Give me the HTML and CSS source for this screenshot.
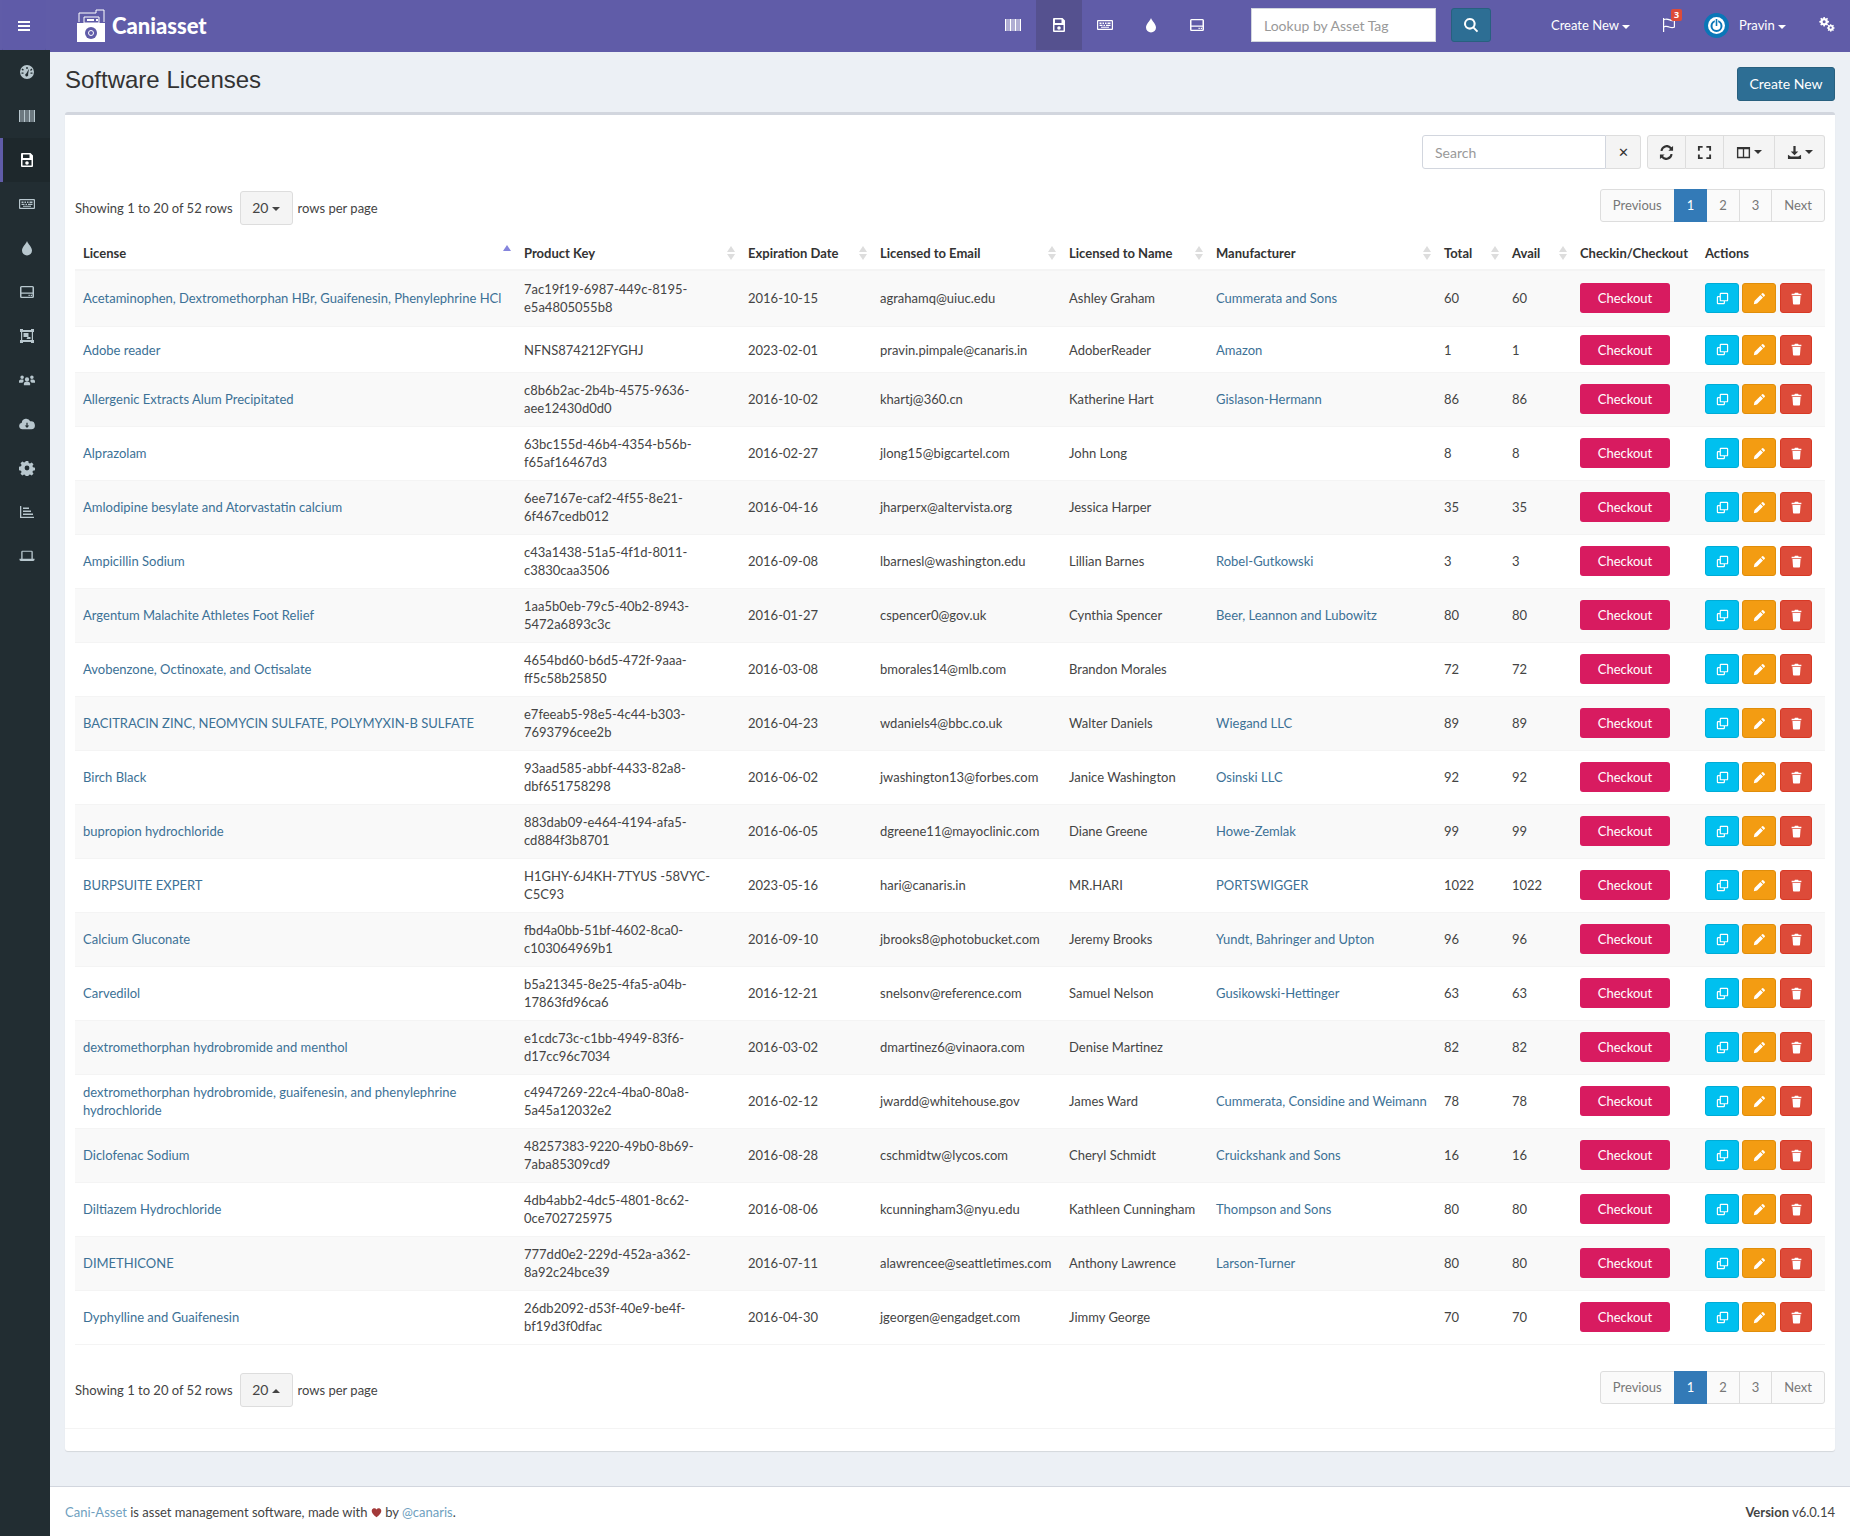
FILE: index.html
```html
<!doctype html>
<html>
<head>
	<meta charset="UTF-8">
	<title>Software Licenses</title>
	<link rel="stylesheet" href="styles.css">
</head>
<body>
<svg class="defs" width="0" height="0">
	<symbol id="i-barcode" viewBox="0 0 16 16"><path d="M0 2h1.500v12H0zM2.500 2h1v12h-1zM4.500 2h2v12h-2zM7.500 2h1v12h-1zM9.500 2h2v12h-2zM12.500 2h1v12h-1zM14.500 2H16v12h-1.500z"/></symbol>
	<symbol id="i-save" viewBox="0 0 16 16"><path fill-rule="evenodd" d="M2 1h9.500L14 3.500V14a1 1 0 0 1-1 1H3a1 1 0 0 1-1-1V2a1 1 0 0 1 1-1zM4 2.500V6h6.500V2.500zM3.500 8v5.500h9V8zM8 9.200a1.800 1.800 0 1 1 0 3.600 1.800 1.800 0 0 1 0-3.600z"/></symbol>
	<symbol id="i-keyboard" viewBox="0 0 16 16"><path fill-rule="evenodd" d="M1 3h14a1 1 0 0 1 1 1v8a1 1 0 0 1-1 1H1a1 1 0 0 1-1-1V4a1 1 0 0 1 1-1zm.2 1.200v7.600h13.600V4.200zM2.500 5.500h2v1.400h-2zm3 0h1.500v1.400H5.500zm2.500 0h1.500v1.400H8zm2.500 0h3v1.400h-3zm-8 2.200h3v1.400h-3zm4 0H8v1.400H6.500zm2.500 0h4.500v1.400H9zM4 9.800h8v1H4z"/></symbol>
	<symbol id="i-drop" viewBox="0 0 16 16"><path d="M8 1c1 3 5 6 5 9.500A5 5 0 0 1 3 10.500C3 7 7 4 8 1z"/></symbol>
	<symbol id="i-hdd" viewBox="0 0 16 16"><path fill-rule="evenodd" d="M2.500 2h11A1.500 1.500 0 0 1 15 3.500v9a1.500 1.500 0 0 1-1.500 1.500h-11A1.500 1.500 0 0 1 1 12.500v-9A1.500 1.500 0 0 1 2.500 2zm0 1.200v5.300h11V3.200zm0 6.500v3.100h11V9.700zm7 1h1.300v1.200H9.500zm2.200 0H13v1.200h-1.300z"/></symbol>
	<symbol id="i-object" viewBox="0 0 16 16"><path fill-rule="evenodd" d="M1 1h3v1h8V1h3v3h-1v8h1v3h-3v-1H4v1H1v-3h1V4H1zm2.200 3v8h9.600V4zM4.500 5h5v4h-5zm4 4h3v2h-4z"/></symbol>
	<symbol id="i-users" viewBox="0 0 18 16"><path d="M9 5a2.400 2.400 0 1 1 0 4.800A2.400 2.400 0 0 1 9 5zM3.500 3a2 2 0 1 1 0 4 2 2 0 0 1 0-4zM14.500 3a2 2 0 1 1 0 4 2 2 0 0 1 0-4zM5.500 14v-2c0-1.500 1.200-2 3.500-2s3.500.5 3.500 2v2zM0 11V9.500C0 8 1 7.500 3.500 7.500c.6 0 1.100.1 1.500.3-.2.600 0 1.300.5 1.700-.8.300-1.300.8-1.500 1.500zM18 11V9.500c0-1.500-1-2-3.500-2-.6 0-1.100.1-1.500.3.200.600 0 1.300-.5 1.700.8.300 1.300.8 1.500 1.500z"/></symbol>
	<symbol id="i-cloud" viewBox="0 0 18 16"><path fill-rule="evenodd" d="M4 14a3.800 3.800 0 0 1-.9-7.500A5 5 0 0 1 12.600 5 4.500 4.500 0 0 1 14 14zm4.300-7.500v3.300H6.500L9 12.500l2.500-2.700H9.700V6.500z"/></symbol>
	<symbol id="i-cog" viewBox="0 0 16 16"><path fill-rule="evenodd" d="M6.700 1h2.600l.4 2 1.300.6 1.700-1.100 1.800 1.800-1.100 1.700.6 1.300 2 .4v2.600l-2 .4-.6 1.300 1.100 1.700-1.800 1.800-1.700-1.100-1.300.6-.4 2H6.700l-.4-2-1.300-.6-1.700 1.100-1.800-1.800 1.100-1.700-.6-1.300-2-.4V6.700l2-.4.6-1.300-1.100-1.700 1.800-1.800L5 2.600l1.300-.6zM8 5.600a2.400 2.400 0 1 0 0 4.800 2.400 2.400 0 0 0 0-4.800z"/></symbol>
	<symbol id="i-chart" viewBox="0 0 16 16"><path d="M1 2h1.300v10.700H15V14H1zM4 3.500h6v1.600H4zM4 6.500h8v1.600H4zM4 9.500h10v1.600H4z"/></symbol>
	<symbol id="i-laptop" viewBox="0 0 18 16"><path fill-rule="evenodd" d="M4 2h10a1.500 1.500 0 0 1 1.500 1.500V11h2v1a1.500 1.500 0 0 1-1.500 1.500H2A1.500 1.500 0 0 1 .5 12v-1h2V3.500A1.500 1.500 0 0 1 4 2zm0 1.300V11h10V3.300z"/></symbol>
	<symbol id="i-dash" viewBox="0 0 16 16"><path fill-rule="evenodd" d="M8 1a7 7 0 1 1 0 14A7 7 0 0 1 8 1zM7.300 3v2h1.400V3zM3.500 4.500l-1 1 1.400 1.300 1-1zm9 0L11 6l1 1 1.400-1.500zM2.500 8.500v1.300h2V8.500zm9 0v1.300h2V8.500zM10 4.800 7.300 9.500a1.500 1.500 0 1 0 1.800.8z"/></symbol>
	<symbol id="i-copy" viewBox="0 0 16 16"><path fill-rule="evenodd" d="M6 1h7.500A1.500 1.500 0 0 1 15 2.500V10a1.500 1.500 0 0 1-1.500 1.500H11v2A1.500 1.500 0 0 1 9.500 15h-7A1.500 1.500 0 0 1 1 13.500v-7A1.500 1.500 0 0 1 2.500 5h2V2.500A1.500 1.500 0 0 1 6 1zm0 1.500V10h7.500V2.500zM2.500 6.500v7h7v-2H6A1.500 1.500 0 0 1 4.500 10V6.500z"/></symbol>
	<symbol id="i-pencil" viewBox="0 0 16 16"><path d="M11.300 1.500a1 1 0 0 1 1.400 0l1.800 1.800a1 1 0 0 1 0 1.400l-1.300 1.300-3.200-3.200zM9.100 3.700l3.200 3.200L5 14.200 1 15l.8-4z"/></symbol>
	<symbol id="i-trash" viewBox="0 0 16 16"><path d="M6 1h4l.6 1.300H14v1.700H2V2.300h3.400zM3 5h10l-.7 9.500a1 1 0 0 1-1 1H4.700a1 1 0 0 1-1-1z"/></symbol>
	<symbol id="i-search" viewBox="0 0 16 16"><path fill-rule="evenodd" d="M6.800 1a5.800 5.800 0 0 1 4.700 9.200l3.700 3.700-1.400 1.400-3.700-3.700A5.800 5.800 0 1 1 6.800 1zm0 2a3.800 3.800 0 1 0 0 7.600 3.800 3.800 0 0 0 0-7.600z"/></symbol>
	<symbol id="i-flag" viewBox="0 0 16 16"><path fill-rule="evenodd" d="M2 1h1.200v1C5 1 7 1.500 9 2.300c1.700.6 3.200.6 5-.3v8.500c-1.800 1-3.500 1-5.300.3-2-.7-3.800-1.200-5.500-.3V15H2zm1.200 2.200v6c2-.7 3.800-.2 5.800.5 1.500.5 2.700.5 3.800 0V3.900C11.300 4.300 10 4.200 8.500 3.600 6.500 2.800 4.800 2.400 3.200 3.200z"/></symbol>
	<symbol id="i-gears" viewBox="0 0 18 16"><path fill-rule="evenodd" d="M5.800 0.500h1.400l.3 1.300 1 .4 1.100-.7 1 1-.7 1.100.4 1 1.300.3v1.400l-1.300.3-.4 1 .7 1.100-1 1-1.100-.7-1 .4-.3 1.300H5.800l-.3-1.300-1-.4-1.100.7-1-1 .7-1.100-.4-1-1.300-.3V4.900l1.300-.3.4-1-.7-1.100 1-1 1.100.7 1-.4zM6.500 4a1.600 1.600 0 1 0 0 3.200 1.600 1.600 0 0 0 0-3.200zM13 8l1 .2.300.9.900.3.800-.5.800.8-.5.800.3.900 1 .2v1.100l-1 .2-.3.900.5.800-.8.800-.8-.5-.9.300-.2 1h-1.100l-.2-1-.9-.3-.8.5-.8-.8.5-.8-.3-.9-1-.2v-1.100l1-.2.3-.9-.5-.8.8-.8.8.5.9-.3.2-1zm.4 2.700a1.200 1.200 0 1 0 0 2.400 1.200 1.200 0 0 0 0-2.400z"/></symbol>
	<symbol id="i-refresh" viewBox="0 0 16 16"><path d="M13.300 2.300 15 1v5h-5l1.800-1.800A4.600 4.600 0 0 0 3.700 6.500H1.600a6.700 6.700 0 0 1 11.700-4.200zM2.700 13.700 1 15v-5h5l-1.800 1.800a4.600 4.600 0 0 0 8.100-2.300h2.100a6.700 6.700 0 0 1-11.700 4.200z"/></symbol>
	<symbol id="i-full" viewBox="0 0 16 16"><path d="M1 1h5v2H3v3H1zM10 1h5v5h-2V3h-3zM1 10h2v3h3v2H1zM13 10h2v5h-5v-2h3z"/></symbol>
	<symbol id="i-cols" viewBox="0 0 16 16"><path fill-rule="evenodd" d="M1 2h14v12H1zm1.500 2.500v8h4.800v-8zm6.200 0v8h4.800v-8z"/></symbol>
	<symbol id="i-export" viewBox="0 0 16 16"><path d="M6.800 1h2.400v6H12L8 11 4 7h2.800zM1 10.500l3 1.800h8l3-1.800V15H1z"/></symbol>
	<symbol id="i-heart" viewBox="0 0 16 16"><path d="M8 15C3 11 1 8.500 1 5.500A3.800 3.800 0 0 1 8 3.500a3.800 3.800 0 0 1 7 2c0 3-2 5.500-7 9.500z"/></symbol>
</svg>

<header class="topbar">
	<a class="menu_toggle">
		<svg class="bars" viewBox="0 0 12 10"><path d="M0 0h12v2H0zM0 4h12v2H0zM0 8h12v2H0z"/></svg>
	</a>
	<a class="logo">
		<svg class="logo_img" viewBox="0 0 28 33">
			<path d="M2 13V4h17v-3h8v12" fill="none" stroke="#fff" stroke-width="1"/>
			<path d="M7 8h15v6H7z" fill="none" stroke="#fff" stroke-width="1"/>
			<path d="M10 10h7v2h-7zM19 10h2v2h-2z" fill="#fff"/>
			<path fill="#fff" d="M0 14h28v19H0z"/>
			<circle cx="14" cy="24" r="6" fill="#605ca8"/>
			<circle cx="14" cy="24" r="2.500" fill="none" stroke="#fff" stroke-width="1"/>
		</svg>
		<span>Caniasset</span>
	</a>
	<nav class="top_nav">
		<a><svg class="ic"><use href="#i-barcode"/></svg></a>
		<a class="on"><svg class="ic"><use href="#i-save"/></svg></a>
		<a><svg class="ic"><use href="#i-keyboard"/></svg></a>
		<a><svg class="ic"><use href="#i-drop"/></svg></a>
		<a><svg class="ic"><use href="#i-hdd"/></svg></a>
	</nav>
	<form class="lookup">
		<input placeholder="Lookup by Asset Tag">
		<button type="button"><svg class="ic"><use href="#i-search"/></svg></button>
	</form>
	<div class="top_right">
		<a class="create_menu">Create New <i class="caret"></i></a>
		<a class="flag"><svg class="ic"><use href="#i-flag"/></svg><b class="badge">3</b></a>
		<svg class="avatar" viewBox="0 0 25 25">
			<circle cx="12.500" cy="12.500" r="12.500" fill="#0a76b7"/>
			<circle cx="12.500" cy="12.500" r="8.500" fill="#fff"/>
			<circle cx="12.500" cy="13" r="5" fill="none" stroke="#0a76b7" stroke-width="2"/>
			<path d="M10.800 5h3.400v8h-3.400z" fill="#fff"/>
			<path d="M11.700 6h1.600v7h-1.600z" fill="#0a76b7"/>
		</svg>
		<a class="user_menu">Pravin <i class="caret"></i></a>
		<a class="gears"><svg class="ic"><use href="#i-gears"/></svg></a>
	</div>
</header>

<div class="wrapper">
	<aside class="sidebar">
		<a><svg class="ic"><use href="#i-dash"/></svg></a>
		<a><svg class="ic"><use href="#i-barcode"/></svg></a>
		<a class="active"><svg class="ic"><use href="#i-save"/></svg></a>
		<a><svg class="ic"><use href="#i-keyboard"/></svg></a>
		<a><svg class="ic"><use href="#i-drop"/></svg></a>
		<a><svg class="ic"><use href="#i-hdd"/></svg></a>
		<a><svg class="ic"><use href="#i-object"/></svg></a>
		<a><svg class="ic"><use href="#i-users"/></svg></a>
		<a><svg class="ic"><use href="#i-cloud"/></svg></a>
		<a><svg class="ic"><use href="#i-cog"/></svg></a>
		<a><svg class="ic"><use href="#i-chart"/></svg></a>
		<a><svg class="ic"><use href="#i-laptop"/></svg></a>
	</aside>

	<div class="main">
		<section class="content">
			<div class="page_head">
				<h1>Software Licenses</h1>
				<a class="btn_create">Create New</a>
			</div>

			<div class="box">
				<div class="toolbar">
					<div class="search_group">
						<input placeholder="Search">
						<button type="button">✕</button>
					</div>
					<div class="tool_group">
						<button type="button" class="t_refresh"><svg class="ic"><use href="#i-refresh"/></svg></button>
						<button type="button" class="t_full"><svg class="ic"><use href="#i-full"/></svg></button>
						<button type="button" class="t_cols"><svg class="ic"><use href="#i-cols"/></svg><i class="caret"></i></button>
						<button type="button" class="t_export"><svg class="ic"><use href="#i-export"/></svg><i class="caret"></i></button>
					</div>
				</div>

				<div class="pager pager_top">
					<div class="page_info">
						<span>Showing 1 to 20 of 52 rows</span>
						<button type="button" class="page_size">20 <i class="caret"></i></button>
						<span>rows per page</span>
					</div>
					<ul class="pagination">
						<li>Previous</li><li class="current">1</li><li>2</li><li>3</li><li>Next</li>
					</ul>
				</div>

				<table class="data">
					<colgroup>
						<col class="c_license"><col class="c_key"><col class="c_date"><col class="c_email"><col class="c_name"><col class="c_mfr"><col class="c_num"><col class="c_num"><col class="c_check"><col class="c_act">
					</colgroup>
					<thead>
						<tr>
							<th class="sort_asc">License</th>
							<th class="sort">Product Key</th>
							<th class="sort">Expiration Date</th>
							<th class="sort">Licensed to Email</th>
							<th class="sort">Licensed to Name</th>
							<th class="sort">Manufacturer</th>
							<th class="sort">Total</th>
							<th class="sort">Avail</th>
							<th>Checkin/Checkout</th>
							<th>Actions</th>
						</tr>
					</thead>
					<tbody id="rows">
						<tr class="tall"><td><a>Acetaminophen, Dextromethorphan HBr, Guaifenesin, Phenylephrine HCl</a></td><td>7ac19f19-6987-449c-8195-e5a4805055b8</td><td>2016-10-15</td><td>agrahamq@uiuc.edu</td><td>Ashley Graham</td><td><a>Cummerata and Sons</a></td><td>60</td><td>60</td><td><a class="btn_checkout">Checkout</a></td><td><div class="acts"><a class="a_copy"><svg class="ic"><use href="#i-copy"/></svg></a><a class="a_edit"><svg class="ic"><use href="#i-pencil"/></svg></a><a class="a_del"><svg class="ic"><use href="#i-trash"/></svg></a></div></td></tr>
						<tr class="short"><td><a>Adobe reader</a></td><td>NFNS874212FYGHJ</td><td>2023-02-01</td><td>pravin.pimpale@canaris.in</td><td>AdoberReader</td><td><a>Amazon</a></td><td>1</td><td>1</td><td><a class="btn_checkout">Checkout</a></td><td><div class="acts"><a class="a_copy"><svg class="ic"><use href="#i-copy"/></svg></a><a class="a_edit"><svg class="ic"><use href="#i-pencil"/></svg></a><a class="a_del"><svg class="ic"><use href="#i-trash"/></svg></a></div></td></tr>
						<tr><td><a>Allergenic Extracts Alum Precipitated</a></td><td>c8b6b2ac-2b4b-4575-9636-aee12430d0d0</td><td>2016-10-02</td><td>khartj@360.cn</td><td>Katherine Hart</td><td><a>Gislason-Hermann</a></td><td>86</td><td>86</td><td><a class="btn_checkout">Checkout</a></td><td><div class="acts"><a class="a_copy"><svg class="ic"><use href="#i-copy"/></svg></a><a class="a_edit"><svg class="ic"><use href="#i-pencil"/></svg></a><a class="a_del"><svg class="ic"><use href="#i-trash"/></svg></a></div></td></tr>
						<tr><td><a>Alprazolam</a></td><td>63bc155d-46b4-4354-b56b-f65af16467d3</td><td>2016-02-27</td><td>jlong15@bigcartel.com</td><td>John Long</td><td></td><td>8</td><td>8</td><td><a class="btn_checkout">Checkout</a></td><td><div class="acts"><a class="a_copy"><svg class="ic"><use href="#i-copy"/></svg></a><a class="a_edit"><svg class="ic"><use href="#i-pencil"/></svg></a><a class="a_del"><svg class="ic"><use href="#i-trash"/></svg></a></div></td></tr>
						<tr><td><a>Amlodipine besylate and Atorvastatin calcium</a></td><td>6ee7167e-caf2-4f55-8e21-6f467cedb012</td><td>2016-04-16</td><td>jharperx@altervista.org</td><td>Jessica Harper</td><td></td><td>35</td><td>35</td><td><a class="btn_checkout">Checkout</a></td><td><div class="acts"><a class="a_copy"><svg class="ic"><use href="#i-copy"/></svg></a><a class="a_edit"><svg class="ic"><use href="#i-pencil"/></svg></a><a class="a_del"><svg class="ic"><use href="#i-trash"/></svg></a></div></td></tr>
						<tr><td><a>Ampicillin Sodium</a></td><td>c43a1438-51a5-4f1d-8011-c3830caa3506</td><td>2016-09-08</td><td>lbarnesl@washington.edu</td><td>Lillian Barnes</td><td><a>Robel-Gutkowski</a></td><td>3</td><td>3</td><td><a class="btn_checkout">Checkout</a></td><td><div class="acts"><a class="a_copy"><svg class="ic"><use href="#i-copy"/></svg></a><a class="a_edit"><svg class="ic"><use href="#i-pencil"/></svg></a><a class="a_del"><svg class="ic"><use href="#i-trash"/></svg></a></div></td></tr>
						<tr><td><a>Argentum Malachite Athletes Foot Relief</a></td><td>1aa5b0eb-79c5-40b2-8943-5472a6893c3c</td><td>2016-01-27</td><td>cspencer0@gov.uk</td><td>Cynthia Spencer</td><td><a>Beer, Leannon and Lubowitz</a></td><td>80</td><td>80</td><td><a class="btn_checkout">Checkout</a></td><td><div class="acts"><a class="a_copy"><svg class="ic"><use href="#i-copy"/></svg></a><a class="a_edit"><svg class="ic"><use href="#i-pencil"/></svg></a><a class="a_del"><svg class="ic"><use href="#i-trash"/></svg></a></div></td></tr>
						<tr><td><a>Avobenzone, Octinoxate, and Octisalate</a></td><td>4654bd60-b6d5-472f-9aaa-ff5c58b25850</td><td>2016-03-08</td><td>bmorales14@mlb.com</td><td>Brandon Morales</td><td></td><td>72</td><td>72</td><td><a class="btn_checkout">Checkout</a></td><td><div class="acts"><a class="a_copy"><svg class="ic"><use href="#i-copy"/></svg></a><a class="a_edit"><svg class="ic"><use href="#i-pencil"/></svg></a><a class="a_del"><svg class="ic"><use href="#i-trash"/></svg></a></div></td></tr>
						<tr><td><a>BACITRACIN ZINC, NEOMYCIN SULFATE, POLYMYXIN-B SULFATE</a></td><td>e7feeab5-98e5-4c44-b303-7693796cee2b</td><td>2016-04-23</td><td>wdaniels4@bbc.co.uk</td><td>Walter Daniels</td><td><a>Wiegand LLC</a></td><td>89</td><td>89</td><td><a class="btn_checkout">Checkout</a></td><td><div class="acts"><a class="a_copy"><svg class="ic"><use href="#i-copy"/></svg></a><a class="a_edit"><svg class="ic"><use href="#i-pencil"/></svg></a><a class="a_del"><svg class="ic"><use href="#i-trash"/></svg></a></div></td></tr>
						<tr><td><a>Birch Black</a></td><td>93aad585-abbf-4433-82a8-dbf651758298</td><td>2016-06-02</td><td>jwashington13@forbes.com</td><td>Janice Washington</td><td><a>Osinski LLC</a></td><td>92</td><td>92</td><td><a class="btn_checkout">Checkout</a></td><td><div class="acts"><a class="a_copy"><svg class="ic"><use href="#i-copy"/></svg></a><a class="a_edit"><svg class="ic"><use href="#i-pencil"/></svg></a><a class="a_del"><svg class="ic"><use href="#i-trash"/></svg></a></div></td></tr>
						<tr><td><a>bupropion hydrochloride</a></td><td>883dab09-e464-4194-afa5-cd884f3b8701</td><td>2016-06-05</td><td>dgreene11@mayoclinic.com</td><td>Diane Greene</td><td><a>Howe-Zemlak</a></td><td>99</td><td>99</td><td><a class="btn_checkout">Checkout</a></td><td><div class="acts"><a class="a_copy"><svg class="ic"><use href="#i-copy"/></svg></a><a class="a_edit"><svg class="ic"><use href="#i-pencil"/></svg></a><a class="a_del"><svg class="ic"><use href="#i-trash"/></svg></a></div></td></tr>
						<tr><td><a>BURPSUITE EXPERT</a></td><td>H1GHY-6J4KH-7TYUS -58VYC-C5C93</td><td>2023-05-16</td><td>hari@canaris.in</td><td>MR.HARI</td><td><a>PORTSWIGGER</a></td><td>1022</td><td>1022</td><td><a class="btn_checkout">Checkout</a></td><td><div class="acts"><a class="a_copy"><svg class="ic"><use href="#i-copy"/></svg></a><a class="a_edit"><svg class="ic"><use href="#i-pencil"/></svg></a><a class="a_del"><svg class="ic"><use href="#i-trash"/></svg></a></div></td></tr>
						<tr><td><a>Calcium Gluconate</a></td><td>fbd4a0bb-51bf-4602-8ca0-c103064969b1</td><td>2016-09-10</td><td>jbrooks8@photobucket.com</td><td>Jeremy Brooks</td><td><a>Yundt, Bahringer and Upton</a></td><td>96</td><td>96</td><td><a class="btn_checkout">Checkout</a></td><td><div class="acts"><a class="a_copy"><svg class="ic"><use href="#i-copy"/></svg></a><a class="a_edit"><svg class="ic"><use href="#i-pencil"/></svg></a><a class="a_del"><svg class="ic"><use href="#i-trash"/></svg></a></div></td></tr>
						<tr><td><a>Carvedilol</a></td><td>b5a21345-8e25-4fa5-a04b-17863fd96ca6</td><td>2016-12-21</td><td>snelsonv@reference.com</td><td>Samuel Nelson</td><td><a>Gusikowski-Hettinger</a></td><td>63</td><td>63</td><td><a class="btn_checkout">Checkout</a></td><td><div class="acts"><a class="a_copy"><svg class="ic"><use href="#i-copy"/></svg></a><a class="a_edit"><svg class="ic"><use href="#i-pencil"/></svg></a><a class="a_del"><svg class="ic"><use href="#i-trash"/></svg></a></div></td></tr>
						<tr><td><a>dextromethorphan hydrobromide and menthol</a></td><td>e1cdc73c-c1bb-4949-83f6-d17cc96c7034</td><td>2016-03-02</td><td>dmartinez6@vinaora.com</td><td>Denise Martinez</td><td></td><td>82</td><td>82</td><td><a class="btn_checkout">Checkout</a></td><td><div class="acts"><a class="a_copy"><svg class="ic"><use href="#i-copy"/></svg></a><a class="a_edit"><svg class="ic"><use href="#i-pencil"/></svg></a><a class="a_del"><svg class="ic"><use href="#i-trash"/></svg></a></div></td></tr>
						<tr><td><a>dextromethorphan hydrobromide, guaifenesin, and phenylephrine hydrochloride</a></td><td>c4947269-22c4-4ba0-80a8-5a45a12032e2</td><td>2016-02-12</td><td>jwardd@whitehouse.gov</td><td>James Ward</td><td><a>Cummerata, Considine and Weimann</a></td><td>78</td><td>78</td><td><a class="btn_checkout">Checkout</a></td><td><div class="acts"><a class="a_copy"><svg class="ic"><use href="#i-copy"/></svg></a><a class="a_edit"><svg class="ic"><use href="#i-pencil"/></svg></a><a class="a_del"><svg class="ic"><use href="#i-trash"/></svg></a></div></td></tr>
						<tr><td><a>Diclofenac Sodium</a></td><td>48257383-9220-49b0-8b69-7aba85309cd9</td><td>2016-08-28</td><td>cschmidtw@lycos.com</td><td>Cheryl Schmidt</td><td><a>Cruickshank and Sons</a></td><td>16</td><td>16</td><td><a class="btn_checkout">Checkout</a></td><td><div class="acts"><a class="a_copy"><svg class="ic"><use href="#i-copy"/></svg></a><a class="a_edit"><svg class="ic"><use href="#i-pencil"/></svg></a><a class="a_del"><svg class="ic"><use href="#i-trash"/></svg></a></div></td></tr>
						<tr><td><a>Diltiazem Hydrochloride</a></td><td>4db4abb2-4dc5-4801-8c62-0ce702725975</td><td>2016-08-06</td><td>kcunningham3@nyu.edu</td><td>Kathleen Cunningham</td><td><a>Thompson and Sons</a></td><td>80</td><td>80</td><td><a class="btn_checkout">Checkout</a></td><td><div class="acts"><a class="a_copy"><svg class="ic"><use href="#i-copy"/></svg></a><a class="a_edit"><svg class="ic"><use href="#i-pencil"/></svg></a><a class="a_del"><svg class="ic"><use href="#i-trash"/></svg></a></div></td></tr>
						<tr><td><a>DIMETHICONE</a></td><td>777dd0e2-229d-452a-a362-8a92c24bce39</td><td>2016-07-11</td><td>alawrencee@seattletimes.com</td><td>Anthony Lawrence</td><td><a>Larson-Turner</a></td><td>80</td><td>80</td><td><a class="btn_checkout">Checkout</a></td><td><div class="acts"><a class="a_copy"><svg class="ic"><use href="#i-copy"/></svg></a><a class="a_edit"><svg class="ic"><use href="#i-pencil"/></svg></a><a class="a_del"><svg class="ic"><use href="#i-trash"/></svg></a></div></td></tr>
						<tr><td><a>Dyphylline and Guaifenesin</a></td><td>26db2092-d53f-40e9-be4f-bf19d3f0dfac</td><td>2016-04-30</td><td>jgeorgen@engadget.com</td><td>Jimmy George</td><td></td><td>70</td><td>70</td><td><a class="btn_checkout">Checkout</a></td><td><div class="acts"><a class="a_copy"><svg class="ic"><use href="#i-copy"/></svg></a><a class="a_edit"><svg class="ic"><use href="#i-pencil"/></svg></a><a class="a_del"><svg class="ic"><use href="#i-trash"/></svg></a></div></td></tr>
					</tbody>
				</table>

				<div class="pager pager_bottom">
					<div class="page_info">
						<span>Showing 1 to 20 of 52 rows</span>
						<button type="button" class="page_size">20 <i class="caret up"></i></button>
						<span>rows per page</span>
					</div>
					<ul class="pagination">
						<li>Previous</li><li class="current">1</li><li>2</li><li>3</li><li>Next</li>
					</ul>
				</div>
				<div class="box_footer"></div>
			</div>
		</section>

		<footer class="foot">
			<div><a>Cani-Asset</a> is asset management software, made with <svg class="heart"><use href="#i-heart"/></svg> by <a>@canaris</a>.</div>
			<div><b>Version</b> v6.0.14</div>
		</footer>
	</div>
</div>
</body>
</html>
```

FILE: styles.css
```css
*{box-sizing:border-box}
html,body{margin:0;padding:0}
body{
	font:13px/18px Lato,"Noto Sans",sans-serif;
	color:#444;
	background:#222d32;
	height:1536px;
	overflow:hidden;
}
a{color:#3c7196;text-decoration:none}
ul{list-style:none;margin:0;padding:0}
button{font:inherit;color:inherit}
.defs{display:block;height:0}
.ic{width:16px;height:16px;fill:currentColor;display:block}

.caret{
	display:inline-block;
	width:0;height:0;
	border-left:4px solid transparent;
	border-right:4px solid transparent;
	border-top:4px solid currentColor;
	vertical-align:middle;
}
.caret.up{border-top:0;border-bottom:4px solid currentColor}

/* top bar */
.topbar{
	display:flex;
	align-items:flex-start;
	height:52px;
	background:#605ca8;
	color:#fff;
}
.topbar a{color:#fff}
.menu_toggle{
	flex:none;
	display:flex;
	align-items:center;
	justify-content:center;
	width:44px;height:52px;
	margin-left:2px;
	background:#5f5ba8;
	border-radius:0 0 3px 3px;
	box-shadow:inset 0 -1px 0 #4f4b94;
}
.bars{width:12px;height:12px;fill:#fff}
.logo{display:flex;align-items:center;gap:7px;height:52px;margin-left:31px;flex:none}
.logo_img{width:28px;height:33px;margin-top:-2px}
.logo span{font:900 22px/24px Lato,"Noto Sans",sans-serif}
.top_nav{display:flex;margin-left:auto}
.top_nav a{display:flex;align-items:center;justify-content:center;width:46px;height:50px}
.top_nav a.on{background:#55518f}
.lookup{display:flex;margin:8px 0 0 31px;flex:none}
.lookup input{
	width:185px;height:34px;
	border:1px solid #d2d6de;
	border-radius:0;
	padding:0 12px;
	font:14px Lato,sans-serif;
}
.lookup input::placeholder{color:#999}
.lookup button{
	width:40px;height:34px;
	margin-left:15px;
	background:#2d6e94;
	border:1px solid #28607f;
	border-radius:3px;
	color:#fff;
	display:flex;align-items:center;justify-content:center;
}
.top_right{display:flex;align-items:center;height:50px;flex:none;margin-left:60px;padding-right:15px}
.top_right a{display:block}
.create_menu{width:110px}
.flag{position:relative;width:14px;height:16px}
.flag .ic{width:16px;height:16px}
.badge{
	position:absolute;
	left:10px;top:-8px;
	width:11px;height:12px;
	background:#dd4b39;
	border-radius:2px;
	font:700 9px/12px "Noto Sans",sans-serif;
	text-align:center;
}
.avatar{width:25px;height:25px;margin-left:29px;flex:none}
.user_menu{width:79px;margin-left:10px}
.gears{margin-top:-2px}
.gears .ic{width:17px;height:16px}

/* sidebar */
.wrapper{display:flex;height:1484px}
.sidebar{flex:none;width:50px;background:#222d32;margin-top:-2px;position:relative}
.sidebar a{
	display:flex;align-items:center;justify-content:center;
	height:44px;
	padding-left:4px;
	color:#b8c7ce;
}
.sidebar a.active{background:#1e282c;border-left:3px solid #605ca8;color:#fff;padding-left:1px}
.sidebar .ic{width:16px;height:16px}

.main{flex:1;min-width:0;display:flex;flex-direction:column;background:#ecf0f5}
.content{flex:1;padding:0 15px}
.page_head{display:flex;justify-content:space-between;height:60px}
.page_head h1{
	margin:14px 0 0;
	font:400 24px/28px "Liberation Sans",Arial,sans-serif;
	color:#333;
}
.btn_create{
	width:98px;height:34px;
	margin-top:15px;
	background:#2d6e94;
	border:1px solid #28607f;
	border-radius:3px;
	color:#fff;
	font-size:14px;
	text-align:center;
	line-height:32px;
}

/* main box */
.box{
	height:1339px;
	background:#fff;
	border-top:3px solid #d2d6de;
	border-radius:3px;
	box-shadow:0 1px 1px rgba(0,0,0,.1);
	padding:20px 10px 0;
}
.toolbar{display:flex;justify-content:flex-end;gap:6px;height:34px}
.search_group{display:flex}
.search_group input{
	width:184px;height:34px;
	border:1px solid #d2d6de;
	border-radius:3px 0 0 3px;
	padding:0 12px;
	font:14px Lato,sans-serif;
}
.search_group input::placeholder{color:#999}
.search_group button{
	width:35px;height:34px;
	border:1px solid #ddd;border-left:0;
	border-radius:0 3px 3px 0;
	background:#f4f4f4;
	font-size:13px;
	color:#333;
}
.tool_group{display:flex}
.tool_group button{
	display:flex;align-items:center;justify-content:center;gap:3px;
	height:34px;
	border:1px solid #ddd;border-left:0;
	background:#f4f4f4;
	padding:0;
	color:#333;
}
.tool_group button:first-child{border-left:1px solid #ddd;border-radius:3px 0 0 3px}
.tool_group button:last-child{border-radius:0 3px 3px 0}
.tool_group .ic{width:15px;height:15px}
.t_refresh{width:39px}
.t_full{width:38px}
.t_cols{width:51px}
.t_export{width:50px}

.pager{display:flex;justify-content:space-between;align-items:flex-start}
.pager_top{height:47px;margin-top:20px}
.pager_bottom{margin-top:26px;height:57px}
.page_info{display:flex;align-items:center;height:34px;margin-top:2px}
.page_size{
	width:53px;height:34px;
	margin:0 5px 0 7px;
	background:#f4f4f4;
	border:1px solid #ddd;
	border-radius:3px;
	padding:0;
	font-size:14px;
	color:#444;
}
.pagination{display:flex;height:33px;border:1px solid #ddd;border-radius:3px;background:#fafafa;color:#777}
.pagination li{
	padding:0 12px;
	line-height:31px;
	border-left:1px solid #ddd;
}
.pagination li:first-child{border-left:0;padding:0 12px}
.pagination li.current{background:#337ab7;color:#fff;border-left:0;margin:-1px 0;line-height:33px;padding:0 13px}
.pagination li.current+li{border-left:0}

/* table */
.data{width:1750px;table-layout:fixed;border-collapse:collapse}
.c_license{width:441px}
.c_key{width:224px}
.c_date{width:132px}
.c_email{width:189px}
.c_name{width:147px}
.c_mfr{width:228px}
.c_num{width:68px}
.c_check{width:125px}
.c_act{width:128px}
.data th{
	position:relative;
	height:34px;
	padding:0 8px;
	text-align:left;
	font-weight:700;
	color:#333;
	border-bottom:2px solid #f4f4f4;
	white-space:nowrap;
}
/* sort arrows */
.sort:before,.sort:after,.sort_asc:before{
	content:"";
	position:absolute;
	right:5px;
	border-left:4px solid transparent;
	border-right:4px solid transparent;
}
.sort:before{top:10px;border-bottom:6px solid #ddd}
.sort:after{top:18px;border-top:6px solid #ddd}
.sort_asc:before{top:9px;border-bottom:6px solid #8585dd}
.data td{
	height:54px;
	padding:8px;
	border-bottom:1px solid #f4f4f4;
	vertical-align:middle;
}
.data tbody tr:nth-child(odd){background:#f9f9f9}
.data tr.tall td{height:56px}
.data tr.short td{height:46px;padding:8px 8px 7px}
.btn_checkout{
	display:block;
	width:90px;height:30px;
	background:#d81b60;
	border-radius:3px;
	color:#fff;
	text-align:center;
	font-size:13px;
	line-height:31px;
}
.acts{display:flex;width:108px;height:30px;gap:3px}
.acts a{
	display:flex;align-items:center;justify-content:center;
	width:34px;height:30px;
	border-radius:3px;
	color:#fff;
}
.acts .ic{width:13px;height:13px}
.a_copy{background:#00c0ef;border:1px solid #00acd6}
.a_edit{background:#f39c12;border:1px solid #e08e0b}
.a_del{background:#dd4b39;border:1px solid #d73925;width:32px!important;margin-left:1px}
.box_footer{border-top:1px solid #f4f4f4;margin:0 -10px}

.foot{
	display:flex;
	justify-content:space-between;
	align-items:center;
	flex:none;
	height:50px;
	padding:0 15px;
	background:#fff;
	border-top:1px solid #d2d6de;
}
.foot a{color:#6f9fc0}
.heart{width:11px;height:11px;fill:#a33a3a;vertical-align:-1px}
```
